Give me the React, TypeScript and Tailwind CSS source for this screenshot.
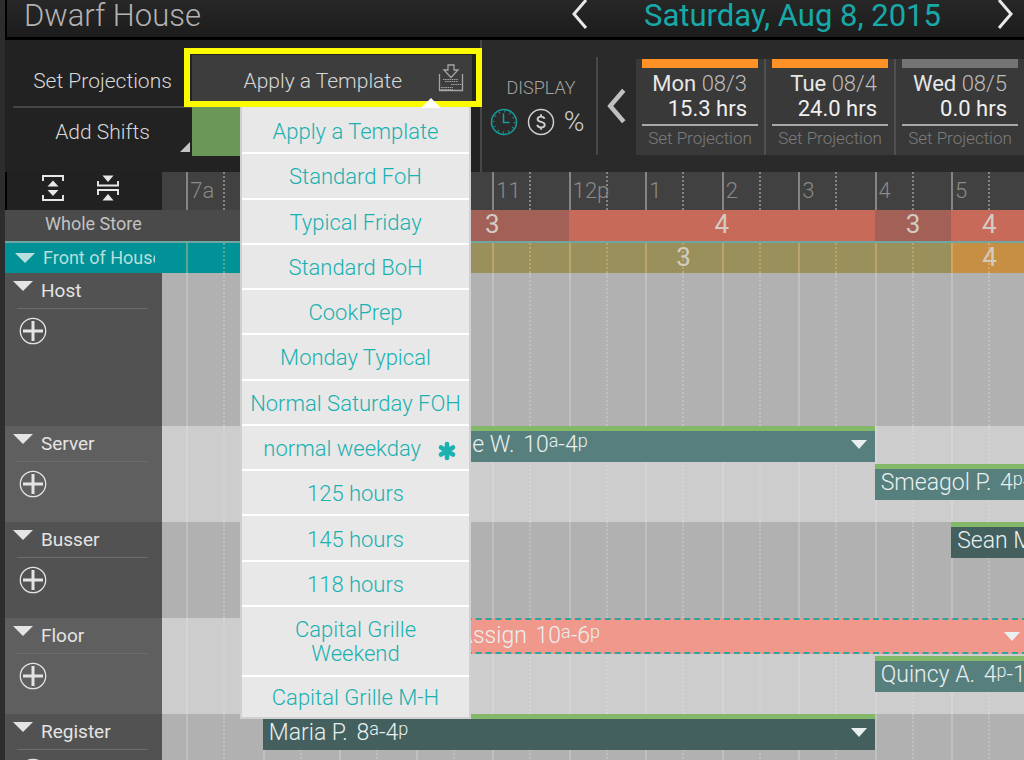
type Tone = "light" | "dark" | "open";

interface Shift {
  name: string;
  start: number;
  end: number;
  tone: Tone;
}

interface Role {
  name: string;
  shifts: Shift[];
}

interface Coverage {
  start: number;
  end: number;
  label: string;
  className: string;
}

// Visible slice of the day, in hours
const DAY_START = 6.683;
const DAY_SPAN = 11.268;

const hours = ["7a", "8", "9", "10", "11", "12p", "1", "2", "3", "4", "5"];

const templates = [
  "Apply a Template",
  "Standard FoH",
  "Typical Friday",
  "Standard BoH",
  "CookPrep",
  "Monday Typical",
  "Normal Saturday FOH",
  "normal weekday",
  "125 hours",
  "145 hours",
  "118 hours",
  "Capital Grille Weekend",
  "Capital Grille M-H",
];

const days = [
  { day: "Mon", date: "08/3", hrs: "15.3 hrs", bar: "bg-[#fe9226]" },
  { day: "Tue", date: "08/4", hrs: "24.0 hrs", bar: "bg-[#fe9226]" },
  { day: "Wed", date: "08/5", hrs: "0.0 hrs", bar: "bg-[#747474]" },
];

const storeCoverage: Coverage[] = [
  { start: 8, end: 10, label: "", className: "bg-[#404040]" },
  { start: 10, end: 12, label: "3", className: "bg-[#a26056]" },
  { start: 12, end: 16, label: "4", className: "bg-[#c86a59]" },
  { start: 16, end: 17, label: "3", className: "bg-[#a26056]" },
  { start: 17, end: 18, label: "4", className: "bg-[#c86a59]" },
];

const frontCoverage: Coverage[] = [
  { start: 8, end: 10, label: "", className: "bg-[#009297]" },
  { start: 10, end: 17, label: "3", className: "bg-[#99905c]" },
  { start: 17, end: 18, label: "4", className: "bg-[#c78f43]" },
];

const roles: Role[] = [
  { name: "Host", shifts: [] },
  {
    name: "Server",
    shifts: [
      { name: "Jamie W.", start: 10, end: 16, tone: "light" },
      { name: "Smeagol P.", start: 16, end: 22, tone: "light" },
    ],
  },
  {
    name: "Busser",
    shifts: [{ name: "Sean M.", start: 17, end: 22, tone: "dark" }],
  },
  {
    name: "Floor",
    shifts: [
      { name: "No Assign", start: 10, end: 18, tone: "open" },
      { name: "Quincy A.", start: 16, end: 22, tone: "light" },
    ],
  },
  {
    name: "Register",
    shifts: [{ name: "Maria P.", start: 8, end: 16, tone: "dark" }],
  },
];

const toneClass: Record<Tone, string> = {
  light: "border-t-[5px] border-[#82b868] bg-[#577f7e] pb-1 pl-[6px]",
  dark: "border-t-[5px] border-[#82b868] bg-[#43605f] pb-1 pl-[6px]",
  open: "border-y-2 border-dashed border-[#2fa5a3] bg-[#f0988b] pl-2",
};

const offset = (hour: number) => `${((hour - DAY_START) / DAY_SPAN) * 100}%`;
const span = (length: number) => `${(length / DAY_SPAN) * 100}%`;

const Chevron = ({
  flip = false,
  className,
  stroke,
}: {
  flip?: boolean;
  className: string;
  stroke: number;
}) => (
  <svg viewBox="0 0 18 32" fill="none" stroke="currentColor" className={className}>
    <path d={flip ? "M3 2 L15 16 L3 30" : "M15 2 L3 16 L15 30"} strokeWidth={stroke} />
  </svg>
);

const Triangle = ({ className }: { className: string }) => (
  <svg viewBox="0 0 20 10" preserveAspectRatio="none" className={className}>
    <path d="M0 0H20L10 10Z" fill="currentColor" />
  </svg>
);

const ImportIcon = () => (
  <svg viewBox="0 0 26 30" fill="none" stroke="currentColor" className="h-[30px] w-[26px]">
    <path d="M10 2H16V7H20L13 14.500L6 7H10Z" strokeWidth="1.300" />
    <path d="M1.500 11V27.500H24.500V11" strokeWidth="1.300" />
    <path d="M5 16.500H20M7 18.500H20" strokeWidth="1" strokeDasharray="1.500 .7" />
    <path d="M13 21.500H24M3 24.500H15M3 26.500H15" strokeWidth="1" strokeDasharray="1.500 .7" />
  </svg>
);

const ClockIcon = () => (
  <svg viewBox="0 0 28 28" fill="none" stroke="currentColor" className="size-7">
    <circle cx="14" cy="14" r="12.500" strokeWidth="1.500" />
    <circle cx="14" cy="14" r="10.500" strokeWidth="2" strokeDasharray="1 4.498" />
    <path d="M13.500 5.500V14.500H19.500" strokeWidth="1.500" />
  </svg>
);

const DollarIcon = () => (
  <svg viewBox="0 0 28 28" fill="none" stroke="currentColor" className="size-7">
    <circle cx="14" cy="14" r="12.500" strokeWidth="1.500" />
    <path
      d="M17.500 10.800C17 9.200 15.700 8.600 14 8.600C12 8.600 10.600 9.600 10.600 11.200C10.600 14.800 17.700 12.900 17.700 16.700C17.700 18.500 16 19.500 14 19.500C12 19.500 10.600 18.500 10.200 16.800M14 6.300V8.600M14 19.500V21.800"
      strokeWidth="1.900"
    />
  </svg>
);

const AsteriskIcon = () => (
  <svg viewBox="0 0 20 20" stroke="currentColor" className="mt-1 size-5">
    <path
      d="M10 3V17M4 6.500L16 13.500M16 6.500L4 13.500"
      strokeWidth="4.600"
      strokeLinecap="round"
    />
  </svg>
);

const PlusIcon = () => (
  <svg viewBox="0 0 28 28" fill="none" stroke="currentColor" className="size-7">
    <circle cx="14" cy="14" r="12.700" strokeWidth="1.300" />
    <path d="M14 4V24M4 14H24" strokeWidth="3" />
  </svg>
);

const ExpandIcon = () => (
  <svg viewBox="0 0 24 28" fill="none" stroke="currentColor" className="h-7 w-6">
    <path d="M2 7V2H22V7M2 21V26H22V21" strokeWidth="1.900" />
    <path d="M12 6.500L17.500 12.500H6.500ZM12 22L17.500 16H6.500Z" fill="currentColor" stroke="none" />
  </svg>
);

const CollapseIcon = () => (
  <svg viewBox="0 0 24 28" fill="none" stroke="currentColor" className="h-7 w-6">
    <path d="M2 7V11.500H22V7M2 21V16H22V21" strokeWidth="1.900" />
    <path d="M12 8L17.500 1.500H6.500ZM12 20L17.500 26.500H6.500Z" fill="currentColor" stroke="none" />
  </svg>
);

const HourGrid = ({
  labels = false,
  line,
}: {
  labels?: boolean;
  line: string;
}) => (
  <div className="absolute inset-0 flex overflow-hidden" aria-hidden={!labels}>
    <div className="shrink-0" style={{ width: offset(7) }} />
    {hours.map((hour) => (
      <div
        key={hour}
        className={`h-full shrink-0 border-l-2 ${line}`}
        style={{ width: span(1) }}
      >
        <div className={`h-full w-1/2 border-r-2 border-dotted ${line}`}>
          {labels && (
            <span className="pl-[2px] text-[22px] leading-[38px] text-[#8a8a8a]">
              {hour}
            </span>
          )}
        </div>
      </div>
    ))}
  </div>
);

const CoverageBar = ({ items }: { items: Coverage[] }) => (
  <div className="flex h-full">
    <div className="shrink-0" style={{ width: offset(8) }} />
    {items.map((item) => (
      <div
        key={item.start}
        className={`flex shrink-0 items-start justify-center text-[26px] leading-7 font-normal text-[#d3cbc3] ${item.className}`}
        style={{ width: span(item.end - item.start) }}
      >
        {item.label}
      </div>
    ))}
  </div>
);

const formatHour = (hour: number) => {
  const suffix = hour < 12 ? "a" : "p";
  return (
    <>
      {hour > 12 ? hour - 12 : hour}
      <span className="align-[5px] text-lg leading-none">{suffix}</span>
    </>
  );
};

const ShiftBar = ({ shift }: { shift: Shift }) => (
  <button
    type="button"
    className={`flex h-9 shrink-0 items-center justify-between overflow-hidden pr-2 text-left text-[23px] leading-7 whitespace-nowrap text-[#e9f0ef] ${toneClass[shift.tone]}`}
    style={{ marginLeft: offset(shift.start), width: span(shift.end - shift.start) }}
  >
    <span>
      {shift.name}{" "}
      <span className="ml-[3px]">
        {formatHour(shift.start)}-{formatHour(shift.end)}
      </span>
    </span>
    <Triangle className="h-[9px] w-4 shrink-0" />
  </button>
);

const RoleRow = ({ role, index }: { role: Role; index: number }) => {
  const odd = index % 2 === 1;
  return (
    <section
      className={`flex shrink-0 ${role.shifts.length ? "h-24" : "h-[153px]"}`}
    >
      <div
        className={`w-[157px] shrink-0 text-[#e4e4e4] ${odd ? "bg-[#5f5f5f]" : "bg-[#525252]"}`}
      >
        <div className="mr-[14px] ml-3 flex h-9 border-b border-[#6c6c6c]">
          <button type="button" aria-label={`Collapse ${role.name}`} className="-ml-1 self-start pt-2">
            <Triangle className="h-[10px] w-5" />
          </button>
          <h3 className="pl-2 text-[19px] leading-9 font-normal">{role.name}</h3>
        </div>
        <button type="button" aria-label={`Add ${role.name} shift`} className="mt-2 ml-[14px]">
          <PlusIcon />
        </button>
      </div>
      <div
        className={`relative min-w-0 flex-1 overflow-hidden ${odd ? "bg-[#cdcdcd]" : "bg-[#b1b1b1]"}`}
      >
        <HourGrid line={odd ? "border-white/15" : "border-white/20"} />
        <div className="relative flex flex-col gap-[2px]">
          {role.shifts.map((shift) => (
            <ShiftBar key={shift.name} shift={shift} />
          ))}
        </div>
      </div>
    </section>
  );
};

const TemplateMenu = () => (
  <div
    role="menu"
    className="absolute top-[52px] left-12 z-20 flex h-[612px] w-[231px] flex-col border-x-2 border-b-2 border-[#d0d0d0] bg-[#e8e8e8] pt-[2px] text-[22px] leading-6 text-[#1bb1b0]"
  >
    <Triangle className="absolute -top-[9px] right-[28px] h-[10px] w-5 rotate-180 text-white" />
    {templates.map((name, i) => (
      <button
        key={name}
        type="button"
        role="menuitem"
        className={`pt-[3px] ${
          i === 12
            ? "h-10 shrink-0"
            : i === 11
              ? "h-[70px] shrink-0 border-b-2 border-white px-10"
              : "flex-1 border-b-2 border-white whitespace-nowrap"
        } ${name === "normal weekday" ? "flex items-center justify-end gap-4 pr-3" : ""}`}
      >
        {name}
        {name === "normal weekday" && <AsteriskIcon />}
      </button>
    ))}
  </div>
);

const Toolbar = () => (
  <div className="flex h-[132px] shrink-0 bg-[#2a2a2a]">
    <div className="flex w-[477px] shrink-0 border-r-2 border-[#484848] bg-[#222222] text-[21px] text-[#d8d8d8]">
      <div className="flex w-[187px] shrink-0 flex-col pl-2">
        <button type="button" className="h-[68px] border-b-2 border-[#454545] pt-[18px]">
          Set Projections
        </button>
        <button type="button" className="relative h-12 pt-[2px]">
          Add Shifts
          <svg viewBox="0 0 10 10" className="absolute right-[2px] bottom-1 size-[10px]">
            <path d="M10 0V10H0Z" fill="#c4c4c4" />
          </svg>
        </button>
      </div>
      <div className="relative flex-1 pt-[15px]">
        <div className="relative w-[280px]">
          <button
            type="button"
            aria-haspopup="menu"
            aria-expanded="true"
            className="flex h-[46px] w-full items-center justify-end gap-9 bg-[#3d3d3d] pt-2 pr-2"
          >
            Apply a Template
            <span className="-mt-2 text-[#a5a5a5]">
              <ImportIcon />
            </span>
          </button>
          <div className="pointer-events-none absolute -top-[7px] -right-[10px] -bottom-[6px] -left-2 z-10 border-[6px] border-[#fdfb00]" />
          <TemplateMenu />
        </div>
        <div className="mt-[6px] h-[49px] w-12 bg-[#6b9858]" />
      </div>
    </div>

    <div className="my-[17px] flex w-[116px] shrink-0 flex-col items-center border-r-2 border-[#484848] pt-[19px] text-[#cfcfcf]">
      <div className="pl-1 text-lg leading-6 text-[#a2a2a2]">DISPLAY</div>
      <div className="mt-1 flex items-center gap-[9px] pt-1 pr-1">
        <button type="button" aria-label="Show hours" className="text-[#179d9c]">
          <ClockIcon />
        </button>
        <button type="button" aria-label="Show cost">
          <DollarIcon />
        </button>
        <button type="button" className="text-[28px] leading-7">
          %
        </button>
      </div>
    </div>

    <button type="button" aria-label="Earlier days" className="w-[38px] shrink-0 pl-2 text-[#c0c0c0]">
      <Chevron className="h-9 w-[22px]" stroke={4} />
    </button>

    <div className="mt-[19px] flex h-24 min-w-0 flex-1 bg-[#393939]">
      {days.map((d, i) => (
        <div
          key={d.day}
          className={`flex-1 px-[6px] ${i < 2 ? "border-r-2 border-[#505050]" : ""}`}
        >
          <div className={`h-[9px] ${d.bar}`} />
          <div className="border-b-2 border-[#a8a8a8] pt-[3px] pr-[11px] pb-[3px] text-right text-[22px] leading-[25px] whitespace-nowrap text-[#bcbcbc]">
            <div>
              <span className="font-normal text-[#e6e6e6]">{d.day}</span> {d.date}
            </div>
            <div className="font-normal text-[#f0f0f0]">{d.hrs}</div>
          </div>
          <button type="button" className="block w-full text-[17px] leading-6 whitespace-nowrap text-[#7c7c7c]">
            Set Projection
          </button>
        </div>
      ))}
    </div>
  </div>
);

export default function App() {
  return (
    <main className="flex h-screen flex-col overflow-hidden bg-[#2d2d2d] pl-[5px] font-['Roboto',sans-serif] font-light">
      <header className="flex h-10 shrink-0 items-start border-b-[3px] border-l-2 border-black bg-linear-to-b from-[#272727] to-[#1c1c1c] pl-[17px]">
        <h1 className="text-[31px] leading-8 text-[#b2b2b2]">Dwarf House</h1>
        <nav className="mr-[10px] ml-auto flex w-[443px] justify-between text-[#e8e8e8]">
          <button type="button" aria-label="Previous day" className="-mt-1">
            <Chevron className="h-8 w-[18px]" stroke={3} />
          </button>
          <h2 className="text-[31px] leading-8 font-normal text-[#17a9a8]">
            Saturday, Aug 8, 2015
          </h2>
          <button type="button" aria-label="Next day" className="-mt-1">
            <Chevron flip className="h-8 w-[18px]" stroke={3} />
          </button>
        </nav>
      </header>

      <Toolbar />

      {/* Hour ruler */}
      <div className="flex h-[38px] shrink-0">
        <div className="flex w-[157px] shrink-0 items-start gap-[31px] border-l-2 border-black bg-[#212121] pt-[2px] pl-[34px] text-[#e8e8e8]">
          <button type="button" aria-label="Expand all">
            <ExpandIcon />
          </button>
          <button type="button" aria-label="Collapse all">
            <CollapseIcon />
          </button>
        </div>
        <div className="relative flex-1 bg-[#414141]">
          <HourGrid labels line="border-[#858585]" />
        </div>
      </div>

      {/* Coverage */}
      <div className="flex h-[31px] shrink-0 bg-[#4a4a4a]">
        <div className="w-[157px] shrink-0 pl-10 text-lg leading-7 font-normal whitespace-nowrap text-[#c2c2c2]">
          Whole Store
        </div>
        <div className="min-w-0 flex-1 overflow-hidden">
          <CoverageBar items={storeCoverage} />
        </div>
      </div>
      <div className="flex h-8 shrink-0 border-t-2 border-[#6fa7a2] bg-[#009297]">
        <div className="flex w-[157px] shrink-0 items-center pr-[7px] pl-[10px] text-[#b9dedd]">
          <Triangle className="h-[10px] w-5 shrink-0" />
          <div className="overflow-hidden pl-2 text-lg leading-7 font-normal whitespace-nowrap">
            Front of House
          </div>
        </div>
        <div className="relative min-w-0 flex-1 overflow-hidden">
          <CoverageBar items={frontCoverage} />
          <HourGrid line="border-[#eac28c]/40" />
        </div>
      </div>

      {roles.map((role, i) => (
        <RoleRow key={role.name} role={role} index={i} />
      ))}
    </main>
  );
}
